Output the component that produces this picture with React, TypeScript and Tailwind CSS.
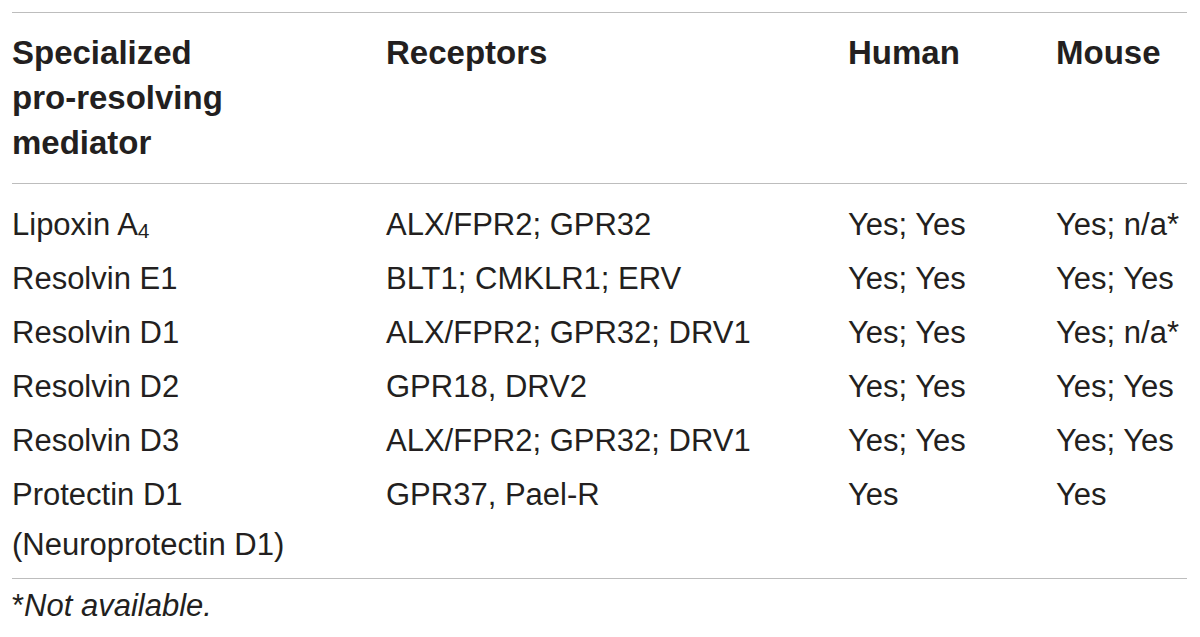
import React from "react";

type Row = {
  mediator: React.ReactNode;
  receptors: string;
  human: string;
  mouse: string;
};

const rows: Row[] = [
  {
    mediator: (
      <>
        Lipoxin A<sub className="text-[21px] relative top-[3px] align-baseline">4</sub>
      </>
    ),
    receptors: "ALX/FPR2; GPR32",
    human: "Yes; Yes",
    mouse: "Yes; n/a*",
  },
  { mediator: "Resolvin E1", receptors: "BLT1; CMKLR1; ERV", human: "Yes; Yes", mouse: "Yes; Yes" },
  { mediator: "Resolvin D1", receptors: "ALX/FPR2; GPR32; DRV1", human: "Yes; Yes", mouse: "Yes; n/a*" },
  { mediator: "Resolvin D2", receptors: "GPR18, DRV2", human: "Yes; Yes", mouse: "Yes; Yes" },
  { mediator: "Resolvin D3", receptors: "ALX/FPR2; GPR32; DRV1", human: "Yes; Yes", mouse: "Yes; Yes" },
  {
    mediator: (
      <>
        Protectin D1
        <br />
        (Neuroprotectin D1)
      </>
    ),
    receptors: "GPR37, Pael-R",
    human: "Yes",
    mouse: "Yes",
  },
];

const cols = "grid grid-cols-[374px_462px_208px_1fr]";

export default function App() {
  return (
    <div
      className="w-[1200px] h-[637px] bg-white text-[#231f20] pt-[12px] px-[12px] overflow-hidden"
      style={{ fontFamily: '"Liberation Sans", Arial, sans-serif' }}
    >
      <div className="w-[1175px]">
        {/* Header */}
        <div className={`${cols} border-t border-[#bdbdbd] pt-[17px] pb-[18px] font-bold text-[33px] leading-[45px]`}>
          <div>
            Specialized
            <br />
            pro-resolving
            <br />
            mediator
          </div>
          <div>Receptors</div>
          <div>Human</div>
          <div>Mouse</div>
        </div>

        {/* Body */}
        <div className="border-t border-b border-[#bdbdbd] pt-[14px] pb-[6px] text-[31px] leading-[50px]">
          {rows.map((r, i) => (
            <div key={i} className={`${cols} py-[2px]`}>
              <div>{r.mediator}</div>
              <div>{r.receptors}</div>
              <div>{r.human}</div>
              <div>{r.mouse}</div>
            </div>
          ))}
        </div>

        <p className="text-[31px] leading-[50px] pt-[2px]">
          *<span className="italic">Not available.</span>
        </p>
      </div>
    </div>
  );
}
